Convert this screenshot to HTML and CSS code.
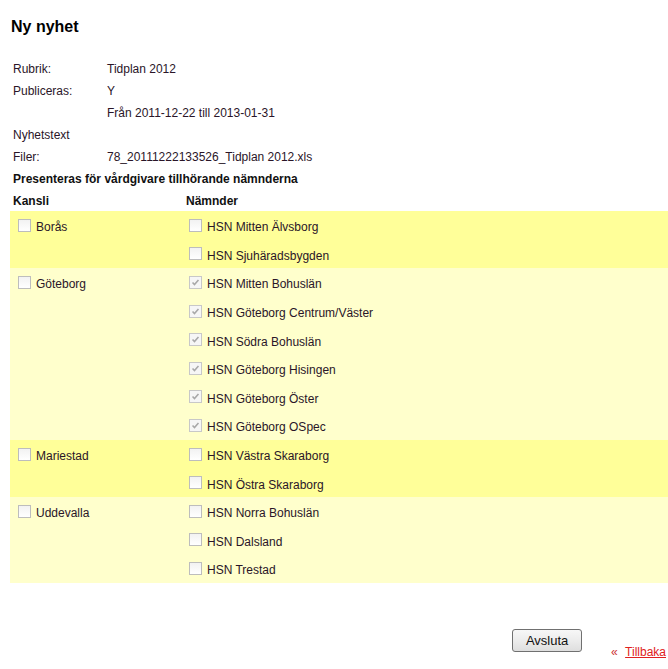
FILE: index.html
```html
<!DOCTYPE html>
<html lang="sv">
<head>
<meta charset="utf-8">
<title>Ny nyhet</title>
<link rel="stylesheet" href="styles.css">
</head>
<body>
<div class="page">
  <h1 class="title">Ny nyhet</h1>
  <div class="info">
    <div class="info-row"><span class="lbl">Rubrik:</span><span class="val">Tidplan 2012</span></div>
    <div class="info-row"><span class="lbl">Publiceras:</span><span class="val">Y</span></div>
    <div class="info-row"><span class="lbl"></span><span class="val">Från 2011-12-22 till 2013-01-31</span></div>
    <div class="info-row"><span class="lbl">Nyhetstext</span><span class="val"></span></div>
    <div class="info-row"><span class="lbl">Filer:</span><span class="val">78_20111222133526_Tidplan 2012.xls</span></div>
    <div class="info-row bold">Presenteras för vårdgivare tillhörande nämnderna</div>
  </div>
  <div class="grid-head">
    <span class="col-k">Kansli</span><span class="col-n">Nämnder</span>
  </div>
  <div class="groups">
    <div class="group dark">
      <div class="kansli"><span class="cb"></span><span class="txt">Borås</span></div>
      <div class="namnder">
        <div class="nrow"><span class="cb"></span><span class="txt">HSN Mitten Älvsborg</span></div>
        <div class="nrow"><span class="cb"></span><span class="txt">HSN Sjuhäradsbygden</span></div>
      </div>
    </div>
    <div class="group light">
      <div class="kansli"><span class="cb"></span><span class="txt">Göteborg</span></div>
      <div class="namnder">
        <div class="nrow"><span class="cb checked"><svg viewBox="0 0 13 13"><path d="M3 6.5 L5.3 9 L10 3.5" /></svg></span><span class="txt">HSN Mitten Bohuslän</span></div>
        <div class="nrow"><span class="cb checked"><svg viewBox="0 0 13 13"><path d="M3 6.5 L5.3 9 L10 3.5" /></svg></span><span class="txt">HSN Göteborg Centrum/Väster</span></div>
        <div class="nrow"><span class="cb checked"><svg viewBox="0 0 13 13"><path d="M3 6.5 L5.3 9 L10 3.5" /></svg></span><span class="txt">HSN Södra Bohuslän</span></div>
        <div class="nrow"><span class="cb checked"><svg viewBox="0 0 13 13"><path d="M3 6.5 L5.3 9 L10 3.5" /></svg></span><span class="txt">HSN Göteborg Hisingen</span></div>
        <div class="nrow"><span class="cb checked"><svg viewBox="0 0 13 13"><path d="M3 6.5 L5.3 9 L10 3.5" /></svg></span><span class="txt">HSN Göteborg Öster</span></div>
        <div class="nrow"><span class="cb checked"><svg viewBox="0 0 13 13"><path d="M3 6.5 L5.3 9 L10 3.5" /></svg></span><span class="txt">HSN Göteborg OSpec</span></div>
      </div>
    </div>
    <div class="group dark">
      <div class="kansli"><span class="cb"></span><span class="txt">Mariestad</span></div>
      <div class="namnder">
        <div class="nrow"><span class="cb"></span><span class="txt">HSN Västra Skaraborg</span></div>
        <div class="nrow"><span class="cb"></span><span class="txt">HSN Östra Skaraborg</span></div>
      </div>
    </div>
    <div class="group light">
      <div class="kansli"><span class="cb"></span><span class="txt">Uddevalla</span></div>
      <div class="namnder">
        <div class="nrow"><span class="cb"></span><span class="txt">HSN Norra Bohuslän</span></div>
        <div class="nrow"><span class="cb"></span><span class="txt">HSN Dalsland</span></div>
        <div class="nrow"><span class="cb"></span><span class="txt">HSN Trestad</span></div>
      </div>
    </div>
  </div>
  <div class="footer">
    <button class="btn" type="button">Avsluta</button>
    <span class="back"><span class="raquo">&laquo;</span><a href="#" class="back-link">Tillbaka</a></span>
  </div>
</div>
</body>
</html>
```

FILE: styles.css
```css
html, body {
  margin: 0;
  padding: 0;
  background: #ffffff;
}
body {
  font-family: "Liberation Sans", Arial, sans-serif;
  font-size: 12px;
  color: #2a1528;
  overflow: hidden;
}
.page {
  padding-left: 10px;
}
.title {
  margin: 17px 0 0 1px;
  font-size: 16px;
  line-height: 20px;
  font-weight: bold;
  color: #000;
}
.info {
  margin-top: 21px;
  padding-left: 3px;
}
.info-row {
  display: flex;
  height: 22px;
  line-height: 22px;
}
.info-row.bold {
  font-weight: bold;
  color: #111;
}
.lbl {
  width: 94px;
  flex: none;
}
.grid-head {
  display: flex;
  height: 21px;
  line-height: 22px;
  font-weight: bold;
  color: #111;
}
.col-k {
  width: 173px;
  padding-left: 3px;
  box-sizing: border-box;
}
.col-n {
  padding-left: 3px;
}
.groups {
  display: flex;
  flex-direction: column;
}
.group {
  display: flex;
}
.group.dark { background: #ffff99; }
.group.light { background: #ffffcc; }
.kansli {
  width: 173px;
  height: 28.6px;
  display: flex;
  align-items: center;
  padding-left: 8px;
  box-sizing: border-box;
}
.namnder {
  display: flex;
  flex-direction: column;
  padding-left: 6px;
}
.nrow {
  height: 28.6px;
  display: flex;
  align-items: center;
}
.txt {
  padding-top: 4px;
}
.cb {
  width: 13px;
  height: 13px;
  box-sizing: border-box;
  border: 1px solid #bdbdbd;
  background: linear-gradient(#f2f2f2, #ffffff);
  margin-right: 5px;
  flex: none;
  display: inline-flex;
}
.cb.checked {
  background: #f6f6f6;
  border-color: #c8c8c8;
}
.cb svg {
  width: 11px;
  height: 11px;
}
.cb svg path {
  fill: none;
  stroke: #a8a8a8;
  stroke-width: 1.8;
}
.footer {
  display: flex;
  justify-content: flex-end;
  align-items: flex-start;
  padding-top: 46px;
  padding-right: 2px;
}
.btn {
  width: 70px;
  height: 23px;
  font-family: "Liberation Sans", Arial, sans-serif;
  font-size: 13px;
  color: #111;
  border: 1px solid #707070;
  border-radius: 3px;
  background: linear-gradient(#f7f7f7, #ececec 50%, #dedede);
  padding: 0;
  margin: 0;
}
.back {
  margin-left: 29px;
  margin-top: 16px;
  line-height: 14px;
  color: #cc3333;
}
.raquo {
  font-size: 12px;
  display: inline-block;
  width: 14px;
}
.back-link {
  color: #e02020;
  text-decoration: underline;
}
```
